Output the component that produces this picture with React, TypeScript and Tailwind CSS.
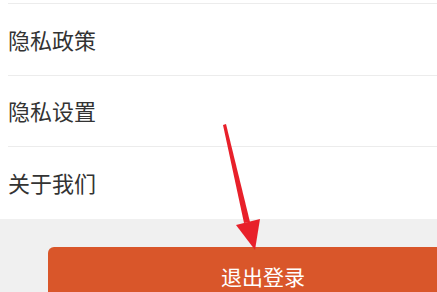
import React from 'react';

const rows = ['隐私政策', '隐私设置', '关于我们'];

export default function App() {
  return (
    <div
      className="relative w-[437px] h-[292px] overflow-hidden bg-[#f0f0f0]"
      style={{ fontFamily: '"Noto Sans CJK SC", "Noto Sans", sans-serif' }}
    >
      <div className="bg-white pl-2">
        <div className="h-[4px] border-b border-[#ececec]" />
        {rows.map((label, i) => (
          <div
            key={label}
            className={`h-[71.5px] flex items-center text-[22px] text-[#333] ${i < rows.length - 1 ? 'border-b border-[#ececec]' : ''}`}
          >
            {label}
          </div>
        ))}
      </div>

      <div className="pt-[28px] pl-[48px]">
        <div className="w-[430px] h-[60px] rounded-[6px] bg-[#d9562a] flex justify-center pt-[14px] text-white text-[21px] leading-[30px]">
          退出登录
        </div>
      </div>

      <svg className="absolute left-0 top-0 pointer-events-none" width="437" height="292" viewBox="0 0 437 292">
        <polygon points="223,125 226,124 250,222 244,223" fill="#e8202a" />
        <polygon points="236,225 260,219 255,250" fill="#e8202a" />
      </svg>
    </div>
  );
}
